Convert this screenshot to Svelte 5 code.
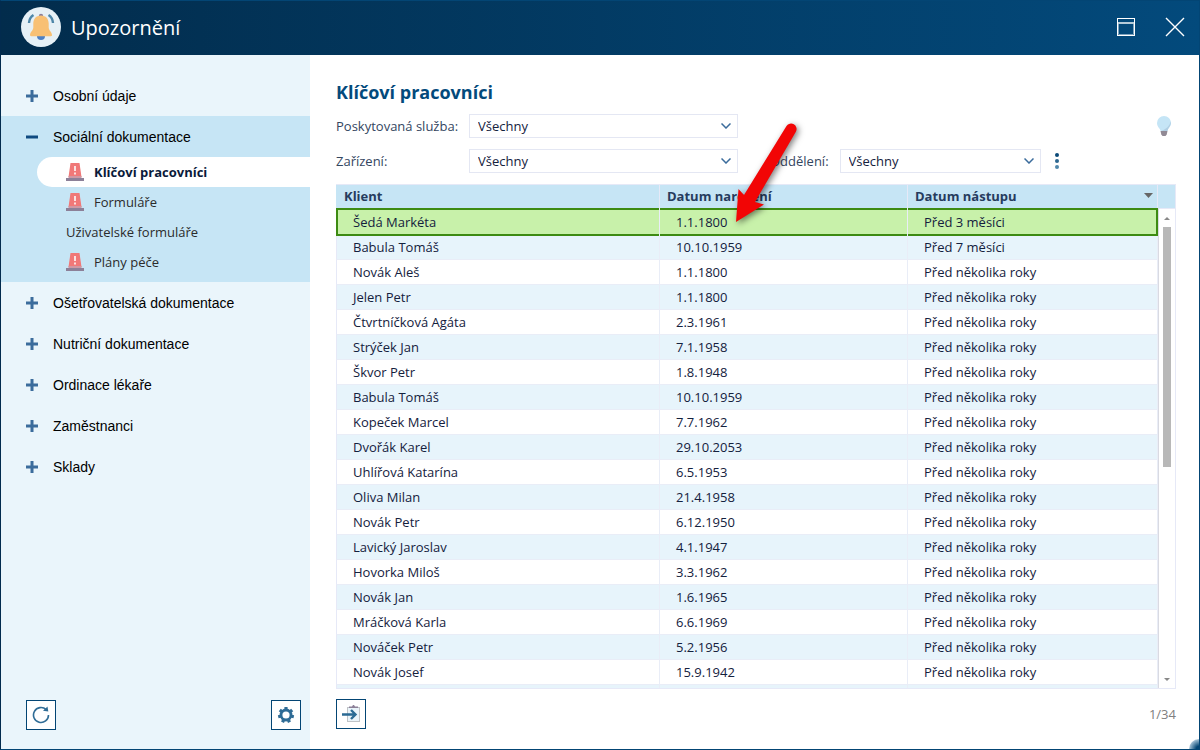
<script>
  const groups = [
    { label: 'Osobní údaje' },
    {
      label: 'Sociální dokumentace',
      items: [
        { label: 'Klíčoví pracovníci', alert: true, current: true },
        { label: 'Formuláře', alert: true },
        { label: 'Uživatelské formuláře' },
        { label: 'Plány péče', alert: true },
      ],
    },
    { label: 'Ošetřovatelská dokumentace' },
    { label: 'Nutriční dokumentace' },
    { label: 'Ordinace lékaře' },
    { label: 'Zaměstnanci' },
    { label: 'Sklady' },
  ]

  const years = 'Před několika roky'

  const clients = [
    ['Šedá Markéta', '1.1.1800', 'Před 3 měsíci'],
    ['Babula Tomáš', '10.10.1959', 'Před 7 měsíci'],
    ['Novák Aleš', '1.1.1800', years],
    ['Jelen Petr', '1.1.1800', years],
    ['Čtvrtníčková Agáta', '2.3.1961', years],
    ['Strýček Jan', '7.1.1958', years],
    ['Škvor Petr', '1.8.1948', years],
    ['Babula Tomáš', '10.10.1959', years],
    ['Kopeček Marcel', '7.7.1962', years],
    ['Dvořák Karel', '29.10.2053', years],
    ['Uhlířová Katarína', '6.5.1953', years],
    ['Oliva Milan', '21.4.1958', years],
    ['Novák Petr', '6.12.1950', years],
    ['Lavický Jaroslav', '4.1.1947', years],
    ['Hovorka Miloš', '3.3.1962', years],
    ['Novák Jan', '1.6.1965', years],
    ['Mráčková Karla', '6.6.1969', years],
    ['Nováček Petr', '5.2.1956', years],
    ['Novák Josef', '15.9.1942', years],
    ['', '', ''],
  ]

  const total = 34
  let selected = $state(0)
</script>

<div class="window">
  <header>
    <svg class="logo" width="40" height="40" viewBox="0 0 40 40">
      <circle cx="20" cy="20" r="20" fill="#e6f0f6" />
      <circle cx="20" cy="9" r="2.2" fill="#8a7f9b" />
      <path d="M16 29h8a4 4 0 0 1-8 0z" fill="#4d80c4" />
      <path
        d="M20 8.500c5 0 7.700 3.600 7.700 8v4c0 3 3.300 4.500 3.300 7.500 0 .8-.4 1.200-1.200 1.200H10.200c-.8 0-1.200-.4-1.200-1.200 0-3 3.300-4.500 3.300-7.500v-4c0-4.400 2.700-8 7.700-8z"
        fill="#f8c074"
      />
      <path
        d="M12.500 8Q8.500 10.500 8 16M27.500 8Q31.500 10.500 32 16"
        fill="none"
        stroke="#4e86a8"
        stroke-width="2.400"
      />
    </svg>
    <h1>Upozornění</h1>
    <button class="control" aria-label="Maximalizovat">
      <svg width="20" height="20" viewBox="0 0 20 20" fill="none">
        <path d="M2 6h16" stroke="#b5cbd9" stroke-width="2" />
        <rect x="1.500" y="1.500" width="17" height="17" stroke="#fff" />
        <path d="M2.500 7v10.500h15V7" stroke="#7fa3bd" />
      </svg>
    </button>
    <button class="control" aria-label="Zavřít">
      <svg width="20" height="20" viewBox="0 0 20 20">
        <path d="M1 1l18 18M19 1L1 19" stroke="#fff" stroke-width="1.400" />
      </svg>
    </button>
  </header>

  <div class="content">
    <aside>
      <nav>
        {#each groups as group}
          <div class="group" class:open={group.items}>
            <button class="group-title" aria-expanded={!!group.items}>
              <svg width="12" height="12" viewBox="0 0 12 12">
                {#if group.items}
                  <path d="M0 6h12" stroke="#0f4a80" stroke-width="3" />
                {:else}
                  <path d="M0 6h12M6 0v12" stroke="#3b6c9c" stroke-width="3" />
                {/if}
              </svg>
              {group.label}
            </button>
            {#if group.items}
              <ul>
                {#each group.items as item}
                  <li>
                    <a href="#list" class:current={item.current}>
                      {#if item.alert}
                        <svg width="18" height="18" viewBox="0 0 18 18">
                          <path d="M4.500 0h9l2 14h-13z" fill="#f07878" />
                          <path d="M2.500 13h13v2h-13z" fill="#cf98a4" />
                          <path d="M0 15h18v3H0z" fill="#8c8098" />
                          <path d="M8 3h2v5H8zM8 9.500h2v2H8z" fill="#fbe2e2" />
                        </svg>
                      {/if}
                      {item.label}
                    </a>
                  </li>
                {/each}
              </ul>
            {/if}
          </div>
        {/each}
      </nav>
      <div class="tools">
        <button class="tool" aria-label="Obnovit">
          <svg width="18" height="18" viewBox="0 0 18 18">
            <path
              d="M16.500 9A7.500 7.500 0 1 1 14.200 3.600"
              fill="none"
              stroke="#2f6c96"
              stroke-width="1.600"
            />
            <path d="M15.500.5l.8 5-5.300-.7z" fill="#2f6c96" />
          </svg>
        </button>
        <button class="tool" aria-label="Nastavení">
          <svg width="18" height="18" viewBox="0 0 18 18" fill="none" stroke="#2f6c96">
            <circle cx="9" cy="9" r="5" stroke-width="2.800" />
            <g stroke-width="3.200">
              {#each [0, 51, 103, 154, 206, 257, 309] as angle}
                <path d="M9 1v2.500" transform="rotate({angle} 9 9)" />
              {/each}
            </g>
          </svg>
        </button>
      </div>
    </aside>

    <main>
      <h2>Klíčoví pracovníci</h2>
      <div class="filters">
        <label class="wide" for="service">Poskytovaná služba:</label>
        <select class="wide" id="service"><option>Všechny</option></select>
        <button class="hint" aria-label="Nápověda">
          <svg width="14" height="20" viewBox="0 0 14 20">
            <path
              d="M7 0a7 7 0 0 1 7 7c0 4-3 5-3.600 8H3.600C3 12 0 11 0 7a7 7 0 0 1 7-7z"
              fill="#c5e5f6"
            />
            <path d="M13.600 5c1 4.500-2.200 6-3.200 10H4.500C9 13 13 10 13.600 5z" fill="#b1cfe3" />
            <path d="M3.500 15h7l-.8 3.500L8.500 20h-3l-1.200-1.500z" fill="#918a95" />
          </svg>
        </button>
      </div>
      <div class="filters">
        <label class="wide" for="facility">Zařízení:</label>
        <select class="wide" id="facility"><option>Všechny</option></select>
        <label class="ward" for="ward">Oddělení:</label>
        <select id="ward"><option>Všechny</option></select>
        <button class="more" aria-label="Další filtry">
          <svg width="4" height="18" viewBox="0 0 4 18">
            <circle cx="2" cy="3" r="2" fill="#0b4a78" />
            <circle cx="2" cy="9" r="2" fill="#2c6790" />
            <circle cx="2" cy="15" r="2" fill="#4f87ab" />
          </svg>
        </button>
      </div>

      <div class="grid" id="list">
        <div class="rows">
          <table>
            <thead>
              <tr>
                <th class="client">Klient</th>
                <th class="birth">Datum narození</th>
                <th>
                  <span class="sorted">
                    Datum nástupu
                    <svg width="9" height="5" viewBox="0 0 9 5">
                      <path d="M0 0h9L4.500 5z" fill="#666" />
                    </svg>
                  </span>
                </th>
              </tr>
            </thead>
            <tbody>
              {#each clients as client, i}
                <tr class:selected={i === selected} onclick={() => (selected = i)}>
                  {#each client as value}
                    <td>{value}</td>
                  {/each}
                </tr>
              {/each}
            </tbody>
          </table>
        </div>
        <div class="scroll">
          <div class="scroll-head"></div>
          <div class="scroll-track">
            <svg width="6" height="3" viewBox="0 0 6 3"><path d="M0 3h6L3 0z" fill="#888" /></svg>
            <div class="rail"><div class="thumb"></div></div>
            <svg width="6" height="3" viewBox="0 0 6 3"><path d="M0 0h6L3 3z" fill="#888" /></svg>
          </div>
        </div>
      </div>

      <footer>
        <button class="tool" aria-label="Přejít na kartu">
          <svg width="18" height="18" viewBox="0 0 18 18">
            <rect x="5.500" y="2.500" width="12" height="14" fill="#eaf4fa" stroke="#bfc3c7" />
            <path d="M7 3V1.500h3L11 0h1l1 1.500h3V3z" fill="#8c8098" />
            <path
              d="M0 9.500h12M9 5l4.500 4.500L9 14"
              fill="none"
              stroke="#2b6a94"
              stroke-width="2.400"
            />
          </svg>
        </button>
        <span>{selected + 1}/{total}</span>
      </footer>
    </main>
  </div>

  <div class="grip"></div>
  <svg class="pointer" width="72" height="110" viewBox="0 0 72 110">
    <path
      d="M6 102L8.500 69l5.500 6L56.500 6a5.500 5.500 0 0 1 9.500 5.500L25 82l9 2.500z"
      fill="#f20505"
    />
  </svg>
</div>

<style>
  :global(body) {
    margin: 0;
  }

  .window {
    position: relative;
    display: flex;
    flex-direction: column;
    box-sizing: border-box;
    height: 100vh;
    border: 1px solid #034574;
    border-left-color: #022b4e;
    font-family: 'Open Sans', sans-serif;
    font-size: 13px;
    color: #14213d;
    background: #fff;
    overflow: hidden;
  }

  button {
    display: flex;
    align-items: center;
    justify-content: center;
    padding: 0;
    border: 0;
    background: none;
    font: inherit;
    color: inherit;
    cursor: pointer;
  }

  header {
    display: flex;
    align-items: center;
    gap: 10px;
    flex: 0 0 55px;
    box-sizing: border-box;
    margin: -1px -1px 0;
    padding: 0 14px 2px 21px;
    border-top: 1px solid #022f50;
    background: linear-gradient(90deg, #022c4c, #034a7c);
  }

  h1 {
    flex: 1;
    margin: 0;
    font-size: 20px;
    font-weight: 400;
    color: #fff;
  }

  .control {
    width: 22px;
    height: 22px;
    margin-left: 17px;
  }

  .content {
    display: flex;
    flex: 1;
    min-height: 0;
  }

  aside {
    display: flex;
    flex-direction: column;
    justify-content: space-between;
    flex: 0 0 309px;
    padding: 20px 0 19px;
    box-sizing: border-box;
    background: #eaf5fb;
  }

  .group.open {
    padding-bottom: 5px;
    background: #c6e5f5;
  }

  .group-title {
    justify-content: flex-start;
    gap: 15px;
    width: 100%;
    height: 41px;
    padding-left: 25px;
    font-family: 'Liberation Sans', Arial, sans-serif;
    font-size: 14px;
    color: #000;
  }

  ul {
    margin: 0;
    padding: 0;
    list-style: none;
  }

  a {
    display: flex;
    align-items: center;
    gap: 10px;
    height: 30px;
    margin-left: 36px;
    padding-left: 29px;
    color: #2b2b2b;
    text-decoration: none;
  }

  .current {
    border-radius: 15px 0 0 15px;
    font-weight: 700;
    color: #0a1a3a;
    background: #fff;
  }

  .tools {
    display: flex;
    justify-content: space-between;
    padding: 0 9px 0 25px;
  }

  .tool {
    width: 30px;
    height: 30px;
    border: 1px solid #034574;
    background: #fff;
  }

  main {
    display: flex;
    flex-direction: column;
    flex: 1;
    min-width: 0;
    padding: 24px 23px 20px 26px;
  }

  h2 {
    margin: 0 0 9px;
    font-size: 18px;
    line-height: 26px;
    color: #034a7c;
  }

  .filters {
    display: flex;
    align-items: center;
    height: 24px;
    margin-bottom: 11px;
  }

  label {
    color: #34465f;
  }

  label.wide {
    width: 133px;
  }

  .ward {
    margin: 0 11px 0 32px;
  }

  select {
    width: 201px;
    height: 24px;
    padding: 0 8px;
    border: 1px solid #e4e7f3;
    border-radius: 0;
    appearance: none;
    font: inherit;
    color: #14213d;
    background: #fff
      url("data:image/svg+xml,%3Csvg xmlns='http://www.w3.org/2000/svg' width='10' height='6'%3E%3Cpath d='M.5.5L5 5 9.500.5' fill='none' stroke='%233b6c9c' stroke-width='1.500'/%3E%3C/svg%3E")
      no-repeat right 6px center;
  }

  select.wide {
    width: 269px;
  }

  .hint {
    margin-left: auto;
    margin-right: 5px;
  }

  .more {
    margin-left: 14px;
  }

  .grid {
    display: flex;
    flex: 1;
    min-height: 0;
    box-sizing: border-box;
    border-bottom: 1px solid #e6e9f7;
  }

  .rows {
    flex: 1;
    min-width: 0;
    overflow: hidden;
  }

  table {
    width: 100%;
    table-layout: fixed;
    border-spacing: 0;
  }

  th {
    box-sizing: border-box;
    height: 24px;
    padding: 0 4px 2px 7px;
    border-top: 1px solid #e6e9f7;
    border-right: 1px solid #e6e9f7;
    text-align: left;
    line-height: 18px;
    color: #263c5e;
    background: #c6e5f5;
  }

  .client {
    width: 324px;
    padding-left: 8px;
  }

  .birth {
    width: 248px;
  }

  .sorted {
    display: flex;
    align-items: center;
    justify-content: space-between;
  }

  td {
    box-sizing: border-box;
    height: 25px;
    padding: 0 16px;
    border-right: 1px solid #e9edf7;
    border-bottom: 1px solid #e9edf7;
    line-height: 18px;
  }

  td:first-child {
    border-left: 1px solid #e6e9f7;
  }

  tr:nth-child(even) td {
    background: #e7f4fb;
  }

  tr.selected td {
    height: 28px;
    border-bottom: 0;
    background: #c8f1aa;
    box-shadow:
      inset 0 2px #3d8b12,
      inset 0 -2px #3d8b12;
  }

  tr.selected td:first-child {
    border-left: 2px solid #3d8b12;
    padding-left: 15px;
  }

  tr.selected td:last-child {
    border-right: 2px solid #3d8b12;
  }

  tr.selected + tr td {
    height: 24px;
    padding-bottom: 2px;
  }

  .scroll {
    display: flex;
    flex-direction: column;
    flex: 0 0 18px;
    box-sizing: border-box;
    border-right: 1px solid #e6e9f7;
  }

  .scroll-head {
    flex: 0 0 24px;
    box-sizing: border-box;
    border-top: 1px solid #e6e9f7;
    background: #c6e5f5;
  }

  .scroll-track {
    display: flex;
    flex-direction: column;
    align-items: center;
    gap: 7px;
    flex: 1;
    min-height: 0;
    padding: 8px 0 7px;
    border-top: 1px solid #e6e9f7;
    border-left: 1px solid #d9dae2;
  }

  .rail {
    flex: 1;
  }

  .thumb {
    width: 8px;
    height: 54%;
    background: #b8b8b8;
  }

  footer {
    display: flex;
    justify-content: space-between;
    align-items: center;
    padding-top: 10px;
    color: #808080;
  }

  .grip {
    position: absolute;
    right: -10px;
    bottom: -10px;
    width: 20px;
    height: 20px;
    border-radius: 50%;
    background: radial-gradient(circle, #034574 20%, #a9c5d8 70%);
  }

  .pointer {
    position: absolute;
    top: 119px;
    left: 729px;
    filter: drop-shadow(2px 2px 3px rgba(0, 0, 0, 0.5));
    pointer-events: none;
  }
</style>
